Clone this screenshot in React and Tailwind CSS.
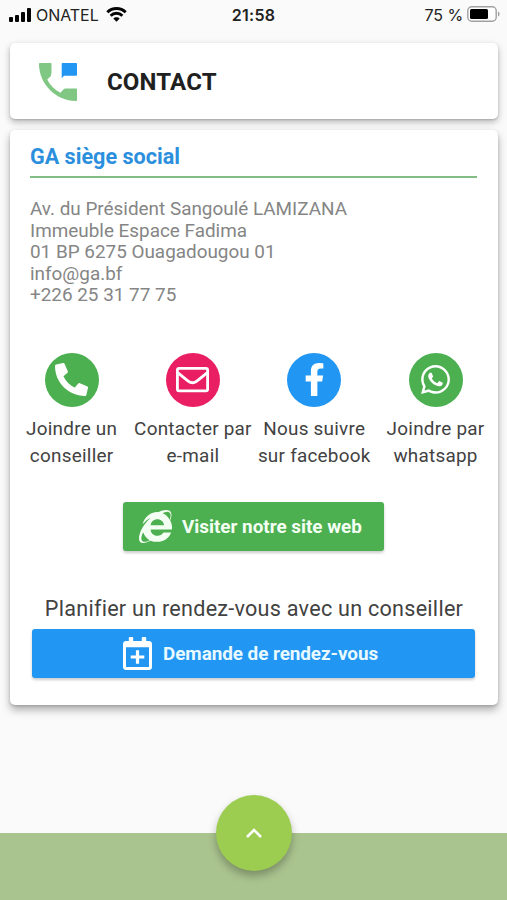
import React from "react";
import { FaPhoneAlt, FaFacebookF, FaWhatsapp, FaInternetExplorer } from "react-icons/fa";

function Envelope({ className }) {
  return (
    <svg className={className} viewBox="0 0 33 33" fill="none" stroke="currentColor" strokeWidth="2.8" strokeLinejoin="round">
      <rect x="1.4" y="5.4" width="30.2" height="22.4" rx="1.6" />
      <path d="M2 9.800c3.400 2.800 6.800 5.600 10.200 8.300 3.200 2.500 5.400 2.500 8.600 0 3.400-2.700 6.800-5.500 10.200-8.300" />
    </svg>
  );
}

function CalendarPlus({ className }) {
  return (
    <svg className={className} viewBox="0 0 29 33" fill="currentColor">
      <path
        fillRule="evenodd"
        d="M5.800.8c0-.5.3-.8.8-.8h2.800c.5 0 .8.3.8.8V4h8.600V.8c0-.5.3-.8.8-.8h2.800c.5 0 .8.3.8.8V4H26c1.700 0 3 1.300 3 3v23c0 1.700-1.300 3-3 3H3c-1.700 0-3-1.300-3-3V7c0-1.700 1.300-3 3-3h2.800ZM3 10.300v19.200c0 .3.200.5.500.5h22c.3 0 .5-.2.5-.5V10.300Z"
      />
      <path d="M12.900 13.200h3.200v5.200h5.200v3.200h-5.200v5.200h-3.200v-5.200H7.700v-3.200h5.200Z" />
    </svg>
  );
}

const actions = [
  { icon: FaPhoneAlt, color: "bg-[#4caf50]", lines: ["Joindre un", "conseiller"] },
  { icon: Envelope, color: "bg-[#e91e63]", lines: ["Contacter par", "e-mail"] },
  { icon: FaFacebookF, color: "bg-[#2196f3]", lines: ["Nous suivre", "sur facebook"] },
  { icon: FaWhatsapp, color: "bg-[#4caf50]", lines: ["Joindre par", "whatsapp"] },
];

function StatusBar() {
  return (
    <header className="grid h-[43px] shrink-0 grid-cols-3 items-start pt-[5px] font-['Inter',sans-serif] text-[16px] leading-5 text-[#222]">
      <div className="flex items-center pl-2">
        <svg className="h-[15px] w-[24px] -translate-y-px" viewBox="0 0 24 15" fill="#050505">
          <rect x="1" y="10" width="4" height="5" rx="1" />
          <rect x="7" y="8" width="4" height="7" rx="1" />
          <rect x="13" y="5" width="4" height="10" rx="1" />
          <rect x="19" y="1" width="4" height="14" rx="1" />
        </svg>
        <span className="ml-[4px] whitespace-nowrap tracking-[-0.05px]">ONATEL</span>
        <svg className="ml-[7px] h-[15px] w-[21px] shrink-0 -translate-y-px" viewBox="0 0 21 15" fill="none" stroke="#050505" strokeWidth="2.9">
          <path d="M1.300 5.200C6.400.2 14.600.2 19.700 5.200" />
          <path d="M4.600 8.700c3.300-3.200 8.500-3.200 11.800 0" />
          <path d="M10.500 14.800 7.300 11.600c1.700-1.700 4.700-1.700 6.400 0Z" fill="#050505" stroke="none" />
        </svg>
      </div>
      <div className="text-center font-semibold tracking-[0.3px]">21:58</div>
      <div className="flex items-center justify-end pr-[7px]">
        <span className="tracking-[-0.1px]">75 %</span>
        <svg className="ml-[4px] h-[16px] w-[33px] -translate-y-px" viewBox="0 0 33 16">
          <rect x="0.8" y="0.8" width="28.4" height="14.4" rx="4" fill="#fff" stroke="#a0a0a0" strokeWidth="1.4" />
          <rect x="3" y="3" width="18" height="10" rx="1.5" fill="#000" />
          <path d="M31 5.500c2 .8 2 4.200 0 5Z" fill="#a0a0a0" />
        </svg>
      </div>
    </header>
  );
}

export default function App() {
  return (
    <div className="flex h-[900px] w-[507px] flex-col overflow-hidden bg-[#fafafa] font-['Roboto',sans-serif]">
      <StatusBar />

      <section className="mx-[10px] flex h-[76px] w-[488px] shrink-0 items-center rounded-[5px] bg-white pl-[29px] shadow-[0_3px_7px_rgba(0,0,0,0.28),0_1px_2px_rgba(0,0,0,0.14)]">
        <svg className="mt-px h-[38px] w-[38px]" viewBox="0 0 38 38">
          <path
            d="M1 0h10.500c.6 0 1 .4 1 1v6.800c0 2.300-.3 4.200-.8 5.400L8.200 16.500c3.100 5.900 7.400 10.200 13.200 13.200l3.300-3.500c.4-.4.9-.6 1.500-.6H37c.6 0 1 .4 1 1V37c0 .6-.4 1-1 1C17 38 0 21 0 1 0 .4.4 0 1 0Z"
            fill="#81c784"
          />
          <path d="M22.700 1c0-.6.4-1 1-1H37c.6 0 1 .4 1 1v10.800c0 .6-.4 1-1 1H25l-2.300 2.400Z" fill="#2196f3" />
        </svg>
        <h1 className="ml-[30px] mt-px text-[24px] font-bold leading-7 tracking-[0.15px] text-[#202020]">CONTACT</h1>
      </section>

      <main className="mx-[10px] mt-[11px] flex h-[575px] w-[488px] shrink-0 flex-col rounded-[5px] bg-white px-[20px] pt-[13px] shadow-[0_5px_9px_rgba(0,0,0,0.3),0_1px_3px_rgba(0,0,0,0.16)]">
        <h2 className="h-[35px] w-[447px] border-b-2 border-[#81bd84] text-[21.6px] font-bold leading-[27px] text-[#2b8fdd]">
          GA siège social
        </h2>
        <address className="mt-[20px] whitespace-nowrap text-[18.9px] not-italic leading-[21.6px] text-[#858585]">
          <div>Av. du Président Sangoulé LAMIZANA</div>
          <div>Immeuble Espace Fadima</div>
          <div>01 BP 6275 Ouagadougou 01</div>
          <div>info@ga.bf</div>
          <div>+226 25 31 77 75</div>
        </address>

        <div className="-mx-[20px] mt-[47px] flex pl-px">
          {actions.map(({ icon: Icon, color, lines }) => (
            <div key={lines[0]} className="flex w-[121.3px] flex-col items-center">
              <div className={"flex size-[54px] items-center justify-center rounded-full text-white " + color}>
                <Icon className="size-[33px]" />
              </div>
              <div className="mt-[8px] whitespace-nowrap text-center text-[18.9px] leading-[27px] tracking-[0.25px] text-[#424242]">
                <div>{lines[0]}</div>
                <div>{lines[1]}</div>
              </div>
            </div>
          ))}
        </div>

        <button className="ml-[93px] mt-[33px] flex h-[49px] w-[261px] shrink-0 items-center rounded-[3px] bg-[#4caf50] pl-[16px] text-[18.9px] font-bold text-[#f4fff4] shadow-[0_2px_3px_rgba(0,0,0,0.2)]">
          <FaInternetExplorer className="size-[33px]" />
          <span className="ml-[10px] mt-[2px] whitespace-nowrap tracking-[-0.02px]">Visiter notre site web</span>
        </button>

        <p className="mt-[43px] whitespace-nowrap text-center text-[21.6px] leading-[30px] tracking-[0.25px] text-[#424242]">
          Planifier un rendez-vous avec un conseiller
        </p>
        <button className="ml-[2px] mt-[5px] flex h-[49px] w-[443px] shrink-0 items-center rounded-[3px] bg-[#2196f3] pl-[91px] text-[18.9px] font-bold text-[#e8faff] shadow-[0_2px_3px_rgba(0,0,0,0.2)]">
          <CalendarPlus className="h-[33px] w-[29px] text-white" />
          <span className="ml-[11px] mt-px whitespace-nowrap tracking-[-0.06px]">Demande de rendez-vous</span>
        </button>
      </main>

      <footer className="relative mt-auto flex h-[67px] shrink-0 justify-center bg-[#aac48f]">
        <button aria-label="Ouvrir" className="absolute -top-[38px] flex size-[76px] items-center justify-center rounded-full bg-[#9ccc50] shadow-[0_5px_9px_rgba(0,0,0,0.28)]">
          <svg className="h-[10px] w-[16px]" viewBox="0 0 16 10" fill="none" stroke="#fff" strokeWidth="2.6">
            <path d="m1 9 7-7 7 7" />
          </svg>
        </button>
      </footer>
    </div>
  );
}
